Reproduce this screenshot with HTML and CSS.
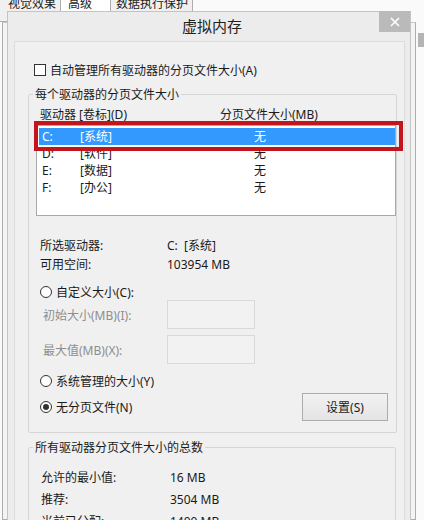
FILE: index.html
```html
<!DOCTYPE html>
<html lang="zh-CN">

<head>
    <meta charset="UTF-8">
    <meta name="viewport" content="width=device-width, initial-scale=1.0">
    <title>虚拟内存</title>
    <link rel="stylesheet" href="styles.css">
</head>

<body>
    <div class="desk">
        <!-- cua so cha: cac tab phia sau -->
        <div class="tabs">
            <span class="tab t1">视觉效果</span>
            <span class="tab t2 on">高级</span>
            <span class="tab t3">数据执行保护</span>
        </div>
        <div class="sheet"></div>
        <div class="side-btn"></div>

        <!-- hop thoai virtual memory -->
        <div class="dlg">
            <div class="titlebar">
                <span class="title">虚拟内存</span>
                <span class="close">
                    <svg width="10" height="10" viewBox="0 0 10 10">
                        <path d="M1 1L9 9M9 1L1 9" stroke="#fff" stroke-width="1.6" fill="none" />
                    </svg>
                </span>
            </div>

            <div class="client">
                <div class="check-row">
                    <span class="box"></span>
                    <span>自动管理所有驱动器的分页文件大小(A)</span>
                </div>

                <fieldset class="grp">
                    <legend>每个驱动器的分页文件大小</legend>

                    <div class="cols">
                        <span class="c1">驱动器 [卷标](D)</span>
                        <span>分页文件大小(MB)</span>
                    </div>

                    <div class="list">
                        <div class="row sel"><span>C:</span><span>[系统]</span><span>无</span></div>
                        <div class="row"><span>D:</span><span>[软件]</span><span>无</span></div>
                        <div class="row"><span>E:</span><span>[数据]</span><span>无</span></div>
                        <div class="row"><span>F:</span><span>[办公]</span><span>无</span></div>
                        <div class="mark"></div>
                    </div>

                    <div class="info first"><span class="k">所选驱动器:</span><span>C:&nbsp; [系统]</span></div>
                    <div class="info"><span class="k">可用空间:</span><span>103954 MB</span></div>

                    <div class="radio-row r1"><span class="radio"></span><span>自定义大小(C):</span></div>
                    <div class="field-row f1">
                        <span class="k dim">初始大小(MB)(I):</span>
                        <span class="input"></span>
                    </div>
                    <div class="field-row f2">
                        <span class="k dim">最大值(MB)(X):</span>
                        <span class="input"></span>
                    </div>

                    <div class="radio-row r2"><span class="radio"></span><span>系统管理的大小(Y)</span></div>
                    <div class="last-row">
                        <div class="radio-row"><span class="radio on"></span><span>无分页文件(N)</span></div>
                        <button class="btn">设置(S)</button>
                    </div>
                </fieldset>

                <fieldset class="grp grp2">
                    <legend>所有驱动器分页文件大小的总数</legend>
                    <div class="sum first"><span class="k">允许的最小值:</span><span>16 MB</span></div>
                    <div class="sum"><span class="k">推荐:</span><span>3504 MB</span></div>
                    <div class="sum"><span class="k">当前已分配:</span><span>1400 MB</span></div>
                </fieldset>
            </div>
        </div>
    </div>
</body>

</html>
```

FILE: styles.css
```css
* {
    box-sizing: border-box;
}

body {
    margin: 0;
    font-family: "Noto Sans", "Noto Sans CJK SC", sans-serif;
    font-size: 12px;
    color: #1a1a1a;
}

.desk {
    position: relative;
    width: 424px;
    height: 520px;
    overflow: hidden;
    background: #fafafa;
}

/* tab cua so cha */
.tabs {
    display: flex;
    height: 22px;
    overflow: hidden;
}

.tab {
    display: block;
    position: relative;
    top: -8px;
    height: 30px;
    line-height: 22px;
    background: #f0f0f0;
    border: 1px solid #adadad;
    border-left: none;
    color: #222;
}

.tab.t1 {
    width: 61px;
    padding-left: 8px;
}

.tab.t2 {
    width: 50px;
    padding-left: 7px;
    background: #fff;
}

.tab.t3 {
    width: 82px;
    padding-left: 5px;
}

.sheet {
    height: 498px;
    margin: 0 8px 0 2px;
    border: 1px solid #adadad;
    border-top-color: #c8c8c8;
    background: #f4f4f4;
}

.side-btn {
    position: absolute;
    left: 418px;
    top: 33px;
    width: 8px;
    height: 14px;
    background: #b4b4b4;
}

/* hop thoai */
.dlg {
    position: absolute;
    left: 7px;
    top: 11px;
    width: 404px;
    height: 530px;
    background: #ececec;
    border: 1px solid #c4c4c4;
}

.titlebar {
    position: relative;
    height: 29px;
    line-height: 28px;
    text-align: center;
    padding-left: 6px;
}

.title {
    font-size: 15px;
    color: #222;
}

.close {
    position: absolute;
    right: 0;
    top: -1px;
    width: 31px;
    height: 21px;
    background: #bababa;
    display: flex;
    align-items: center;
    justify-content: center;
}

.close svg {
    display: block;
}

.client {
    height: 500px;
    margin: 0 5px 0 6px;
    background: #f0f0f0;
    border: 1px solid #dcdcdc;
    border-bottom: none;
}

.check-row {
    display: flex;
    align-items: center;
    gap: 4px;
    height: 18px;
    margin: 19px 0 0 19px;
}

.box {
    width: 12px;
    height: 12px;
    border: 1px solid #333;
    background: #fff;
}

/* groupbox */
.grp {
    width: 368px;
    margin: 7px 0 0 13px;
    padding: 0 0 11px 0;
    border: 1px solid #d5d5d5;
    border-radius: 2px;
}

.grp legend {
    margin-left: 4px;
    padding: 0 2px;
    line-height: 17px;
}

.cols {
    display: flex;
    height: 18px;
    line-height: 18px;
    margin-top: 3px;
    padding-left: 11px;
}

.cols .c1 {
    width: 180px;
}

.list {
    position: relative;
    width: 360px;
    height: 91px;
    margin: 1px 0 0 7px;
    padding: 2px 0 0 2px;
    background: #fff;
    border: 1px solid #a9a9a9;
}

.row {
    display: grid;
    grid-template-columns: 38px 174px 1fr;
    height: 17px;
    line-height: 17px;
    padding-left: 3px;
}

.row.sel {
    background: #3399ff;
    color: #fff;
}

.mark {
    position: absolute;
    left: -3px;
    top: -5px;
    width: 369px;
    height: 30px;
    border: 4px solid #c2151d;
}

.info {
    display: flex;
    height: 19px;
    line-height: 19px;
    padding-left: 11px;
}

.info.first {
    margin-top: 20px;
}

.info .k {
    width: 127px;
}

.radio-row {
    display: flex;
    align-items: center;
    gap: 4px;
    height: 18px;
    padding-left: 11px;
}

.radio-row.r1 {
    margin-top: 9px;
}

.radio-row.r2 {
    margin-top: 8px;
}

.radio {
    position: relative;
    width: 12px;
    height: 12px;
    border: 1px solid #333;
    border-radius: 50%;
    background: #fff;
}

.radio.on::after {
    content: "";
    position: absolute;
    left: 2px;
    top: 2px;
    width: 6px;
    height: 6px;
    border-radius: 50%;
    background: #333;
}

.field-row {
    display: flex;
    align-items: center;
    height: 29px;
    padding-left: 14px;
}

.field-row.f1 {
    margin-top: -1px;
}

.field-row.f2 {
    margin-top: 6px;
}

.field-row .k {
    width: 124px;
}

.dim {
    color: #8e8e8e;
}

.input {
    width: 88px;
    height: 29px;
    border: 1px solid #d9d9d9;
    background: #f2f2f2;
}

.last-row {
    display: flex;
    align-items: center;
    justify-content: space-between;
    height: 28px;
    margin-top: 3px;
    padding-right: 8px;
}

.btn {
    width: 86px;
    height: 28px;
    font-family: inherit;
    font-size: 12px;
    color: #1a1a1a;
    border: 1px solid #acacac;
    background: linear-gradient(#f2f2f2, #e4e4e4);
}

.grp2 {
    margin-top: 6px;
    height: 120px;
}

.sum {
    display: flex;
    height: 22px;
    line-height: 22px;
    padding-left: 12px;
}

.sum.first {
    margin-top: 11px;
}

.sum .k {
    width: 129px;
}
```
